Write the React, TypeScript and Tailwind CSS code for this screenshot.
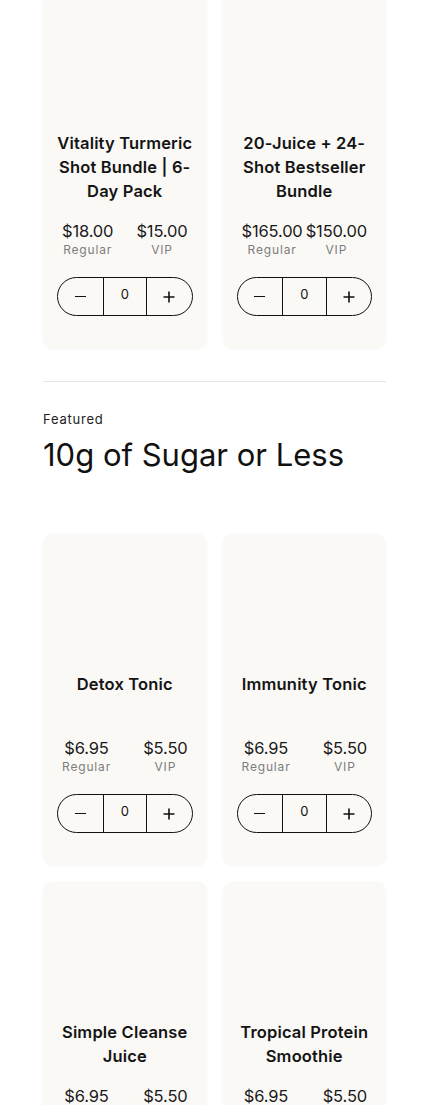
import React from "react";

type Product = { title: string; regular: string; vip: string };

const row1: Product[] = [
  { title: "Vitality Turmeric Shot Bundle | 6-Day Pack", regular: "$18.00", vip: "$15.00" },
  { title: "20-Juice + 24-Shot Bestseller Bundle", regular: "$165.00", vip: "$150.00" },
];

const featured: Product[] = [
  { title: "Detox Tonic", regular: "$6.95", vip: "$5.50" },
  { title: "Immunity Tonic", regular: "$6.95", vip: "$5.50" },
  { title: "Simple Cleanse Juice", regular: "$6.95", vip: "$5.50" },
  { title: "Tropical Protein Smoothie", regular: "$6.95", vip: "$5.50" },
];

function Stepper() {
  return (
    <div className="mx-[14px] grid h-[39px] grid-cols-3 rounded-full border border-[#111]">
      <button className="flex items-center justify-center">
        <span className="block h-[1.5px] w-[11px] bg-[#111]" />
      </button>
      <div className="flex items-center justify-center border-x border-[#111] pb-[3px] text-[13px] text-[#111]">
        0
      </div>
      <button className="relative flex items-center justify-center">
        <svg width="12" height="12" viewBox="0 0 12 12">
          <path d="M6 0.5v11M0.5 6h11" stroke="#111" strokeWidth="1.6" />
        </svg>
      </button>
    </div>
  );
}

function Card({ p }: { p: Product }) {
  return (
    <div className="flex flex-col rounded-[10px] bg-[#faf9f6] pb-[33px] shadow-[0_0_3px_rgba(0,0,0,0.035)]">
      <div className="h-[138px]" />
      <h3 className="min-h-[48px] px-[14px] text-center text-[16.5px] font-semibold leading-6 tracking-[0.01em] text-[#141414]">
        {p.title}
      </h3>
      <div className="mx-[19px] mt-[17px] flex justify-between">
        <div className="flex flex-col items-center">
          <span className="text-[16.5px] leading-[22px] tracking-[-0.01em] text-[#1a1a1a]">{p.regular}</span>
          <span className="text-[12px] leading-4 tracking-[0.07em] text-[#7d7d7d]">Regular</span>
        </div>
        <div className="flex flex-col items-center">
          <span className="text-[16.5px] leading-[22px] tracking-[-0.01em] text-[#1a1a1a]">{p.vip}</span>
          <span className="text-[12px] leading-4 tracking-[0.07em] text-[#7d7d7d]">VIP</span>
        </div>
      </div>
      <div className="mt-[19px]">
        <Stepper />
      </div>
    </div>
  );
}

export default function App() {
  return (
    <div
      className="min-h-[1105px] w-full overflow-hidden bg-white pl-[43px] pr-[44px]"
      style={{ fontFamily: "Inter, 'Noto Sans', sans-serif" }}
    >
      <div className="mt-[-7px] grid grid-cols-2 gap-4">
        {row1.map((p) => (
          <Card key={p.title} p={p} />
        ))}
      </div>
      <div className="mt-[32px] h-px bg-[#e6e6e6]" />
      <p className="mt-[27px] text-[13px] leading-5 tracking-[0.06em] text-[#222]">Featured</p>
      <h2 className="mt-[6px] text-[31px] leading-10 text-[#111]">10g of Sugar or Less</h2>
      <div className="mt-[59px] grid grid-cols-2 gap-4">
        {featured.map((p) => (
          <Card key={p.title} p={p} />
        ))}
      </div>
    </div>
  );
}
